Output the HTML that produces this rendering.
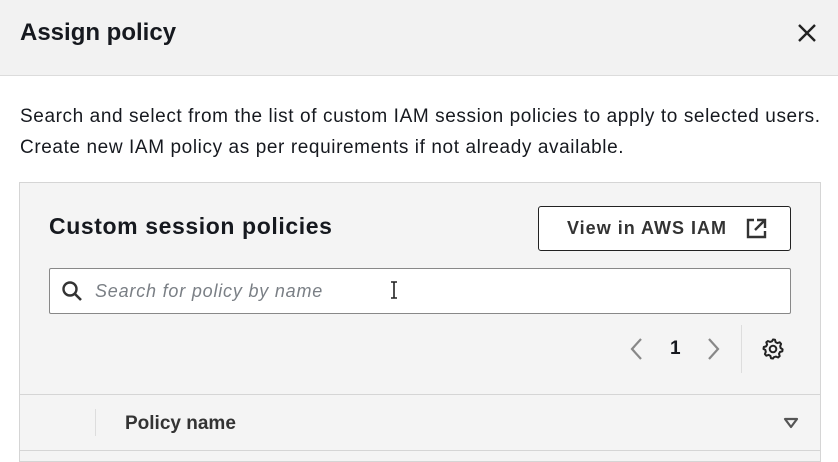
<!DOCTYPE html>
<html><head><style>
*{margin:0;padding:0;box-sizing:border-box}
body{width:838px;height:452px;overflow:hidden;background:#fff;font-family:"Liberation Sans",sans-serif;color:#16191f;position:relative}
.a{position:absolute;white-space:nowrap}
</style></head><body>
<div class="a" style="left:0;top:0;width:838px;height:76px;background:#f2f2f2;border-bottom:1px solid #dcdcdc"></div>
<div class="a" style="left:20px;top:19px;font-size:24px;font-weight:bold">Assign policy</div>
<svg class="a" style="left:796px;top:22px" width="22" height="22" viewBox="0 0 22 22"><path d="M3 3L19 19M19 3L3 19" stroke="#222" stroke-width="2.4"/></svg>
<div class="a" style="left:20px;top:101px;font-size:19px;line-height:31px;letter-spacing:0.6px">Search and select from the list of custom IAM session policies to apply to selected users.<br>Create new IAM policy as per requirements if not already available.</div>
<div class="a" style="left:19px;top:182px;width:802px;height:280px;background:#f4f4f4;border:1px solid #d5d5d5"></div>
<div class="a" style="left:49px;top:213px;font-size:23px;font-weight:bold;letter-spacing:0.6px">Custom session policies</div>
<div class="a" style="left:538px;top:206px;width:253px;height:45px;border:1.5px solid #222;border-radius:3px;background:#fff"></div>
<div class="a" style="left:567px;top:218px;font-size:18px;font-weight:bold;color:#333;letter-spacing:1px">View in AWS IAM</div>
<svg class="a" style="left:746px;top:218px" width="21" height="21" viewBox="0 0 21 21"><path d="M8 2H2V19H19V13" fill="none" stroke="#333" stroke-width="2.4"/><path d="M11 2H19V10M19 2L9 12" fill="none" stroke="#333" stroke-width="2.4"/></svg>
<div class="a" style="left:49px;top:268px;width:742px;height:46px;border:1px solid #888;border-radius:2px;background:#fff"></div>
<svg class="a" style="left:61px;top:280px" width="22" height="22" viewBox="0 0 22 22"><circle cx="9" cy="9" r="6.5" fill="none" stroke="#333" stroke-width="2.4"/><path d="M14 14L20 20" stroke="#333" stroke-width="2.6"/></svg>
<div class="a" style="left:95px;top:281px;font-size:18px;font-style:italic;color:#7a7f85;letter-spacing:0.8px">Search for policy by name</div>
<svg class="a" style="left:389px;top:280px" width="10" height="20" viewBox="0 0 10 20"><path d="M2 2H8M2 18H8M5 2V18" stroke="#222" stroke-width="1.6" fill="none"/></svg>
<svg class="a" style="left:628px;top:337px" width="16" height="24" viewBox="0 0 16 24"><path d="M13 2L4 12L13 22" fill="none" stroke="#888" stroke-width="2.2"/></svg>
<div class="a" style="left:670px;top:338px;font-size:19px;font-weight:bold">1</div>
<svg class="a" style="left:706px;top:337px" width="16" height="24" viewBox="0 0 16 24"><path d="M3 2L12 12L3 22" fill="none" stroke="#888" stroke-width="2.2"/></svg>
<div class="a" style="left:741px;top:325px;width:1px;height:48px;background:#ddd"></div>
<svg class="a" style="left:761px;top:337px" width="24" height="24" viewBox="0 0 24 24"><path d="M12 2.5l2 .3.6 2.3 1.8 1 2.3-.8 1.4 1.6-.9 2.2.4 1.9 2 1.3v0l-.3 2-2.3.7-1 1.8.7 2.300-1.6 1.4-2.2-.9-2 .6L12 21.5l-2-.3-.6-2.3-1.8-1-2.3.8-1.4-1.6.9-2.2-.5-2L2.5 12l.3-2 2.3-.6 1-1.8-.8-2.3L6.9 4l2.2.9 1.9-.6z" fill="none" stroke="#222" stroke-width="2" stroke-linejoin="round"/><circle cx="12" cy="12" r="3.3" fill="none" stroke="#222" stroke-width="2"/></svg>
<div class="a" style="left:20px;top:394px;width:800px;height:1px;background:#d5d5d5"></div>
<div class="a" style="left:20px;top:450px;width:800px;height:1px;background:#d5d5d5"></div>
<div class="a" style="left:95px;top:409px;width:1px;height:27px;background:#ddd"></div>
<div class="a" style="left:125px;top:413px;font-size:19px;font-weight:bold;color:#333">Policy name</div>
<svg class="a" style="left:783px;top:417px" width="16" height="12" viewBox="0 0 16 12"><path d="M2 2H14L8 10Z" fill="none" stroke="#555" stroke-width="2.2" stroke-linejoin="round"/></svg>
</body></html>
